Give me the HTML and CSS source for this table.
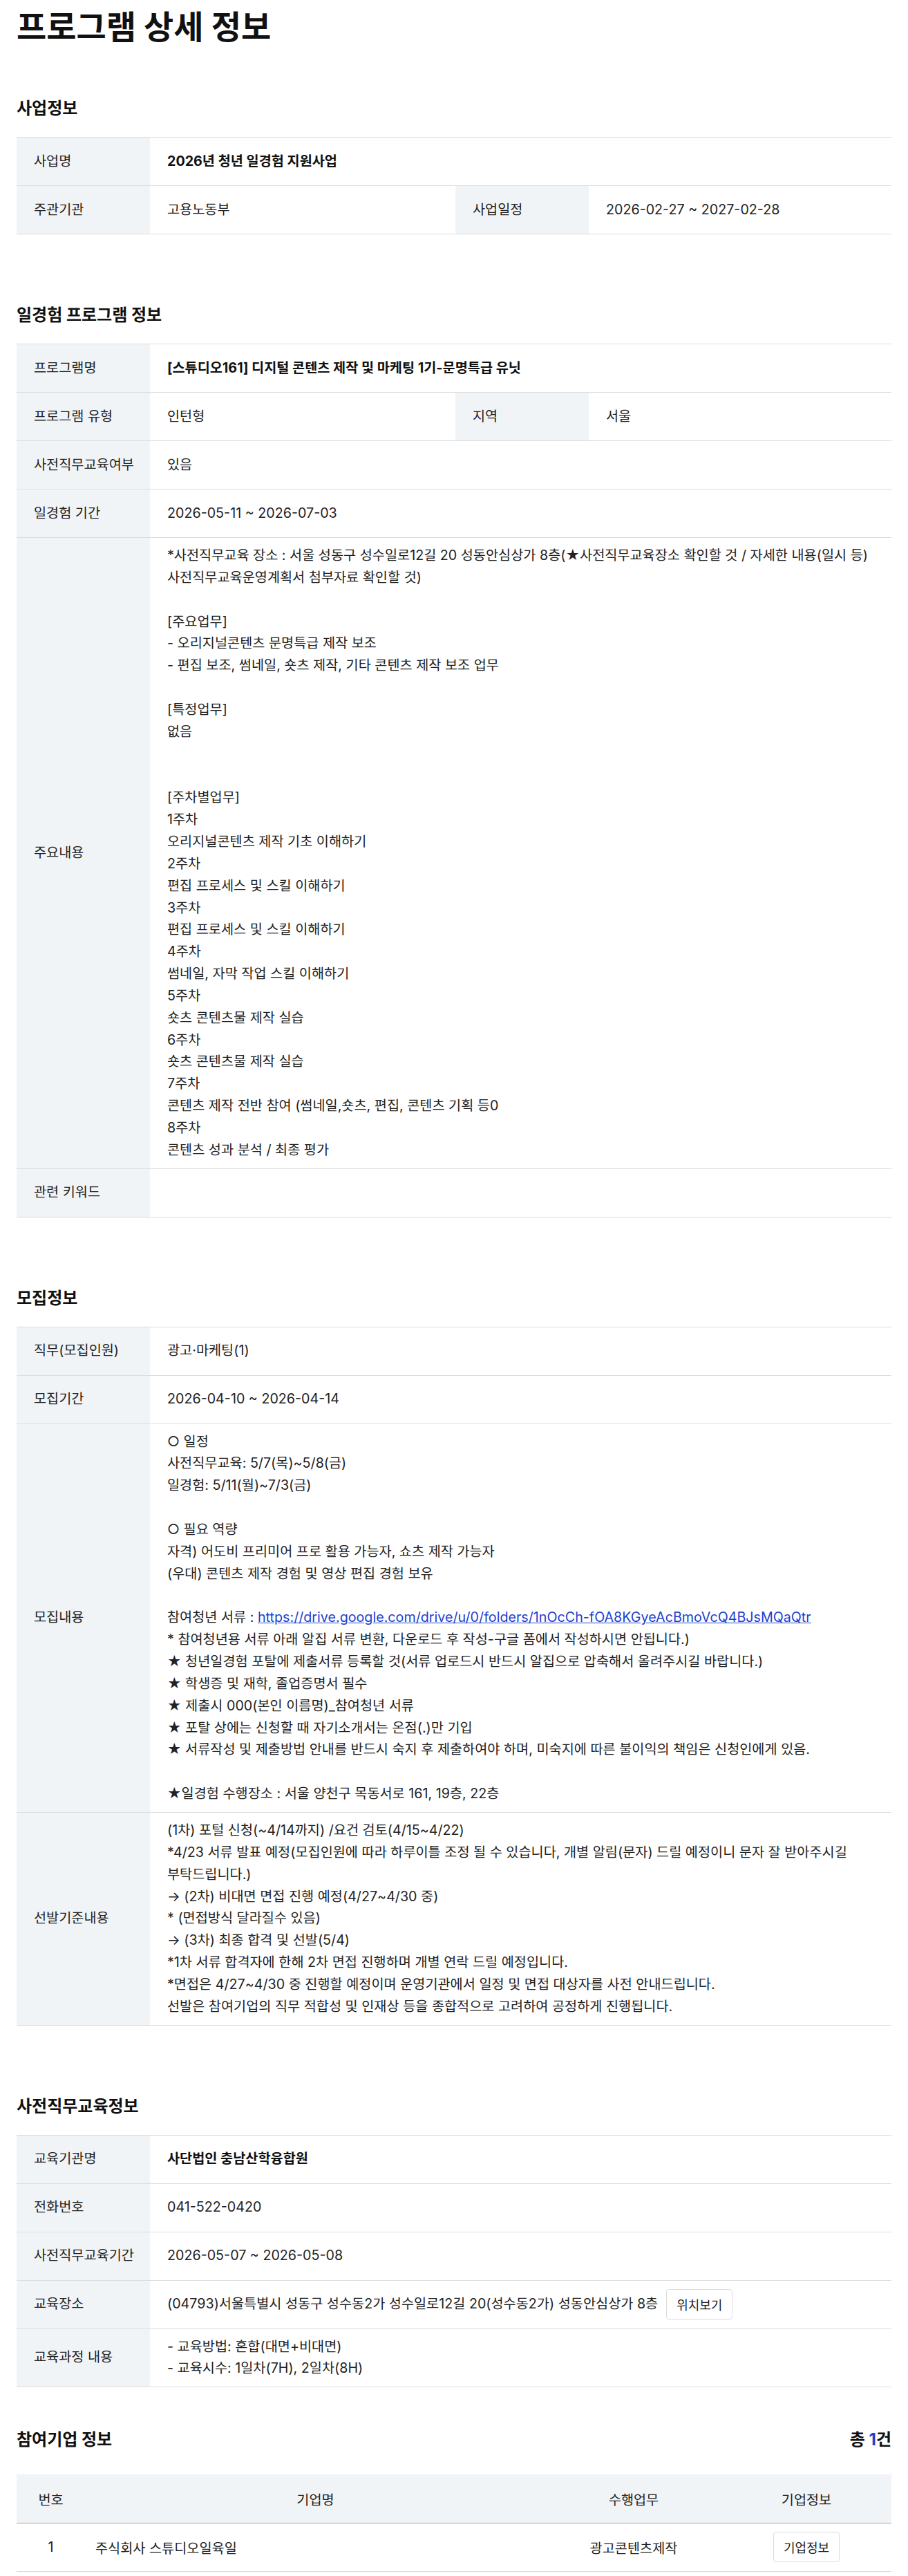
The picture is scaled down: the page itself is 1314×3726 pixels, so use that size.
FILE: index.html
```html
<!DOCTYPE html>
<html lang="ko">
<head>
<meta charset="utf-8">
<title>프로그램 상세 정보</title>
<link rel="stylesheet" href="styles.css">
</head>
<body>
<div class="page">
  <h1 class="page-title">프로그램 상세 정보</h1>

  <section class="section">
    <h2 class="section-title">사업정보</h2>
    <table class="info-table">
      <colgroup><col class="c-th"><col class="c-td"><col class="c-th"><col></colgroup>
      <tbody>
        <tr><th>사업명</th><td colspan="3"><strong>2026년 청년 일경험 지원사업</strong></td></tr>
        <tr><th>주관기관</th><td>고용노동부</td><th>사업일정</th><td>2026-02-27 ~ 2027-02-28</td></tr>
      </tbody>
    </table>
  </section>

  <section class="section">
    <h2 class="section-title">일경험 프로그램 정보</h2>
    <table class="info-table">
      <colgroup><col class="c-th"><col class="c-td"><col class="c-th"><col></colgroup>
      <tbody>
        <tr><th>프로그램명</th><td colspan="3"><strong>[스튜디오161] 디지털 콘텐츠 제작 및 마케팅 1기-문명특급 유닛</strong></td></tr>
        <tr><th>프로그램 유형</th><td>인턴형</td><th>지역</th><td>서울</td></tr>
        <tr><th>사전직무교육여부</th><td colspan="3">있음</td></tr>
        <tr><th>일경험 기간</th><td colspan="3">2026-05-11 ~ 2026-07-03</td></tr>
        <tr><th>주요내용</th><td colspan="3" class="multi">*사전직무교육 장소 : 서울 성동구 성수일로12길 20 성동안심상가 8층(★사전직무교육장소 확인할 것 / 자세한 내용(일시 등) 사전직무교육운영계획서 첨부자료 확인할 것)

[주요업무]
- 오리지널콘텐츠 문명특급 제작 보조
- 편집 보조, 썸네일, 숏츠 제작, 기타 콘텐츠 제작 보조 업무

[특정업무]
없음


[주차별업무]
1주차
오리지널콘텐츠 제작 기초 이해하기
2주차
편집 프로세스 및 스킬 이해하기
3주차
편집 프로세스 및 스킬 이해하기
4주차
썸네일, 자막 작업 스킬 이해하기
5주차
숏츠 콘텐츠물 제작 실습
6주차
숏츠 콘텐츠물 제작 실습
7주차
콘텐츠 제작 전반 참여 (썸네일,숏츠, 편집, 콘텐츠 기획 등0
8주차
콘텐츠 성과 분석 / 최종 평가</td></tr>
        <tr><th>관련 키워드</th><td colspan="3"></td></tr>
      </tbody>
    </table>
  </section>

  <section class="section">
    <h2 class="section-title">모집정보</h2>
    <table class="info-table">
      <colgroup><col class="c-th"><col class="c-td"><col class="c-th"><col></colgroup>
      <tbody>
        <tr><th>직무(모집인원)</th><td colspan="3">광고·마케팅(1)</td></tr>
        <tr><th>모집기간</th><td colspan="3">2026-04-10 ~ 2026-04-14</td></tr>
        <tr><th>모집내용</th><td colspan="3" class="multi">○ 일정
사전직무교육: 5/7(목)~5/8(금)
일경험: 5/11(월)~7/3(금)

○ 필요 역량
자격) 어도비 프리미어 프로 활용 가능자, 쇼츠 제작 가능자
(우대) 콘텐츠 제작 경험 및 영상 편집 경험 보유

참여청년 서류 : <a class="link" href="#">https://drive.google.com/drive/u/0/folders/1nOcCh-fOA8KGyeAcBmoVcQ4BJsMQaQtr</a>
* 참여청년용 서류 아래 알집 서류 변환, 다운로드 후 작성-구글 폼에서 작성하시면 안됩니다.)
★ 청년일경험 포탈에 제출서류 등록할 것(서류 업로드시 반드시 알집으로 압축해서 올려주시길 바랍니다.)
★ 학생증 및 재학, 졸업증명서 필수
★ 제출시 000(본인 이름명)_참여청년 서류
★ 포탈 상에는 신청할 때 자기소개서는 온점(.)만 기입
★ 서류작성 및 제출방법 안내를 반드시 숙지 후 제출하여야 하며, 미숙지에 따른 불이익의 책임은 신청인에게 있음.

★일경험 수행장소 : 서울 양천구 목동서로 161, 19층, 22층</td></tr>
        <tr><th>선발기준내용</th><td colspan="3" class="multi">(1차) 포털 신청(~4/14까지) /요건 검토(4/15~4/22)
*4/23 서류 발표 예정(모집인원에 따라 하루이틀 조정 될 수 있습니다, 개별 알림(문자) 드릴 예정이니 문자 잘 받아주시길 부탁드립니다.)
→ (2차) 비대면 면접 진행 예정(4/27~4/30 중)
* (면접방식 달라질수 있음)
→ (3차) 최종 합격 및 선발(5/4)
*1차 서류 합격자에 한해 2차 면접 진행하며 개별 연락 드릴 예정입니다.
*면접은 4/27~4/30 중 진행할 예정이며 운영기관에서 일정 및 면접 대상자를 사전 안내드립니다.
선발은 참여기업의 직무 적합성 및 인재상 등을 종합적으로 고려하여 공정하게 진행됩니다.</td></tr>
      </tbody>
    </table>
  </section>

  <section class="section">
    <h2 class="section-title">사전직무교육정보</h2>
    <table class="info-table">
      <colgroup><col class="c-th"><col class="c-td"><col class="c-th"><col></colgroup>
      <tbody>
        <tr><th>교육기관명</th><td colspan="3"><strong>사단법인 충남산학융합원</strong></td></tr>
        <tr><th>전화번호</th><td colspan="3">041-522-0420</td></tr>
        <tr><th>사전직무교육기간</th><td colspan="3">2026-05-07 ~ 2026-05-08</td></tr>
        <tr><th>교육장소</th><td colspan="3"><div class="place"><span>(04793)서울특별시 성동구 성수동2가 성수일로12길 20(성수동2가) 성동안심상가 8층</span><button class="btn" type="button">위치보기</button></div></td></tr>
        <tr><th>교육과정 내용</th><td colspan="3" class="multi">- 교육방법: 혼합(대면+비대면)
- 교육시수: 1일차(7H), 2일차(8H)</td></tr>
      </tbody>
    </table>
  </section>

  <section class="section section-company">
    <div class="section-head">
      <h2 class="section-title">참여기업 정보</h2>
      <p class="total">총 <em>1</em>건</p>
    </div>
    <table class="list-table">
      <colgroup><col class="c-no"><col class="c-name"><col class="c-task"><col class="c-info"></colgroup>
      <thead>
        <tr><th>번호</th><th>기업명</th><th>수행업무</th><th>기업정보</th></tr>
      </thead>
      <tbody>
        <tr><td>1</td><td class="name">주식회사 스튜디오일육일</td><td>광고콘텐츠제작</td><td><button class="btn" type="button">기업정보</button></td></tr>
      </tbody>
    </table>
  </section>
</div>
</body>
</html>
```

FILE: styles.css
```css
* {
  box-sizing: border-box;
}

body {
  margin: 0;
  background: #fff;
  color: #222;
  font-family: "Inter", "Noto Sans CJK KR", sans-serif;
  font-size: 19.7px;
}

.page {
  padding: 10px 24px 15px;
}

.page-title {
  margin: 0 0 74px;
  font-size: 47px;
  line-height: 57px;
  font-weight: 700;
  color: #111;
}

.section + .section {
  margin-top: 101px;
}

.section-title {
  margin: 0 0 25px;
  font-size: 24px;
  line-height: 32px;
  font-weight: 700;
  color: #111;
}

.info-table {
  width: 100%;
  border-collapse: collapse;
  table-layout: fixed;
  border-top: 1px solid #dcdcdc;
}

.c-th {
  width: 193px;
}

.c-td {
  width: 442px;
}

.info-table th,
.info-table td {
  height: 70px;
  padding: 10px 25px;
  border-bottom: 1px solid #dcdcdc;
  line-height: 31.85px;
  text-align: left;
  vertical-align: middle;
  font-weight: 400;
  word-break: keep-all;
}

.info-table td {
  padding-right: 0;
}

.info-table th {
  background: #f1f4f7;
  white-space: nowrap;
}

.info-table strong {
  font-weight: 700;
  color: #111;
}

.multi {
  white-space: pre-line;
}

.link {
  color: #1d3fd0;
  text-decoration: underline;
}

.place {
  display: flex;
  align-items: center;
  gap: 12px;
}

.btn {
  display: inline-flex;
  align-items: center;
  justify-content: center;
  height: 44px;
  padding: 0 14px;
  border: 1px solid #dcdcdc;
  border-radius: 4px;
  background: #fff;
  color: #222;
  font-family: inherit;
  font-size: 18px;
  cursor: pointer;
}

.section-company {
  margin-top: 60px !important;
}

.section-head {
  display: flex;
  justify-content: space-between;
  align-items: center;
  margin-bottom: 34px;
}

.section-head .section-title {
  margin: 0;
}

.total {
  margin: 0;
  font-size: 24px;
  line-height: 32px;
  font-weight: 700;
  color: #111;
}

.total em {
  font-style: normal;
  color: #1d3fd0;
}

.list-table {
  width: 100%;
  border-collapse: collapse;
  table-layout: fixed;
}

.c-no {
  width: 99px;
}

.c-task {
  width: 254px;
}

.c-info {
  width: 246px;
}

.list-table th {
  height: 70px;
  background: #f1f4f7;
  border-bottom: 1px solid #9ea3a8;
  font-weight: 400;
  text-align: center;
}

.list-table td {
  height: 70px;
  border-bottom: 1px solid #dcdcdc;
  text-align: center;
}

.list-table td.name {
  text-align: left;
  padding-left: 15px;
}
```
